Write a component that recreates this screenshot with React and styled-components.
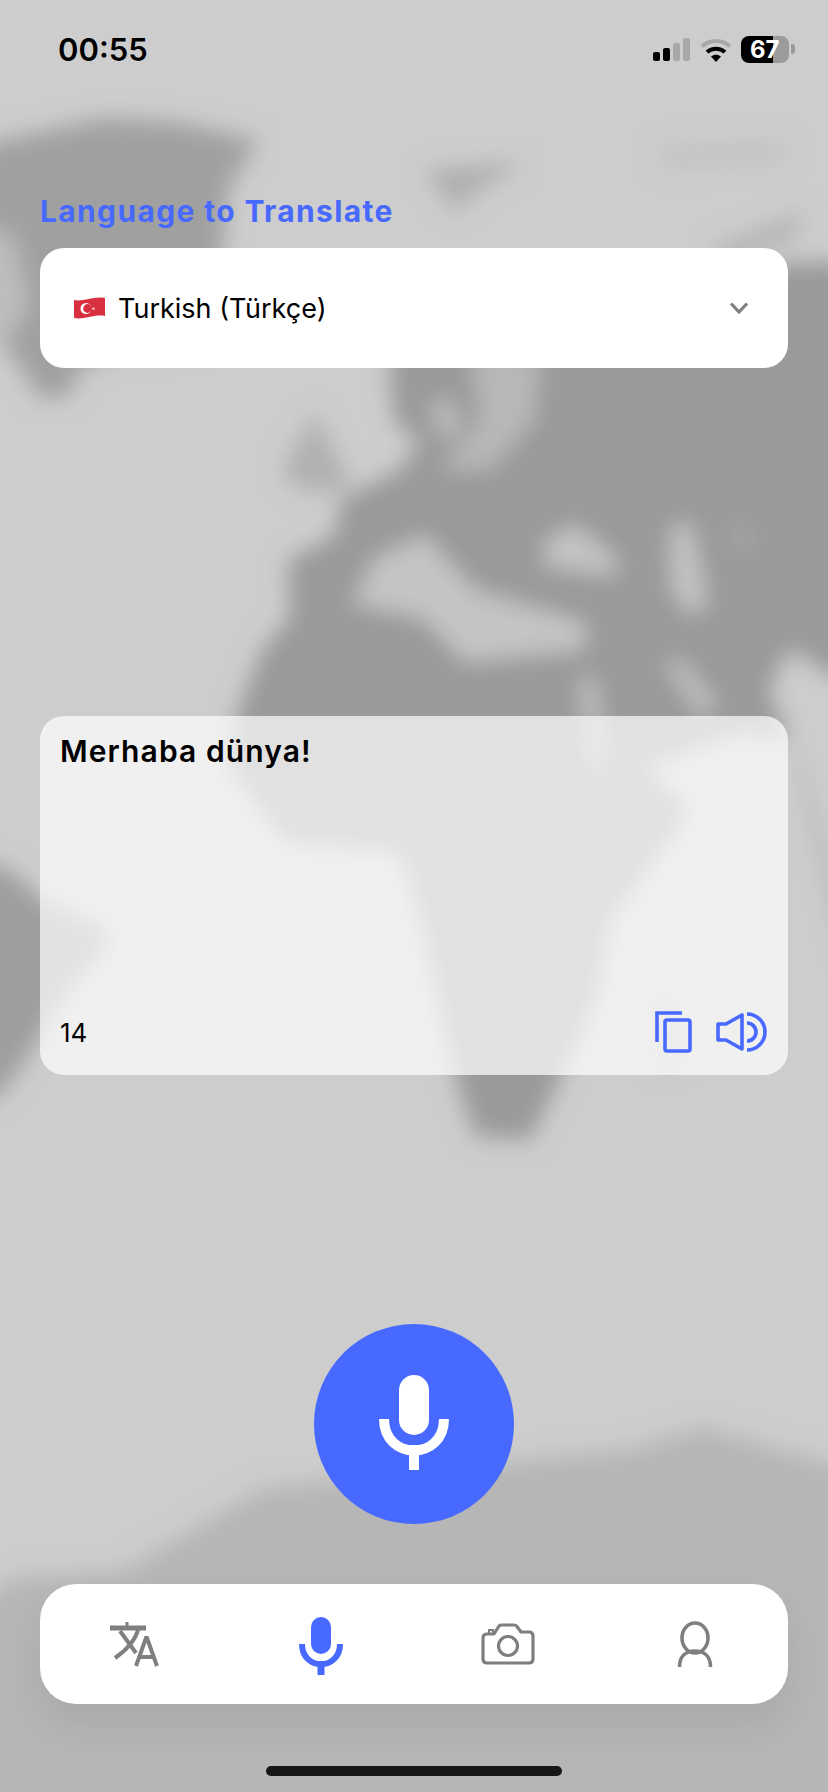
import React from "react";
import styled, { createGlobalStyle } from "styled-components";

const Global = createGlobalStyle`
  html, body { margin: 0; padding: 0; background: #cdcdcd; }
  * { box-sizing: border-box; }
`;

const BLUE = "#4869ff";
const GREY = "#7f7f7f";

const Page = styled.div`
  position: relative;
  width: 828px;
  height: 1792px;
  overflow: hidden;
  background: #cdcdcd;
  font-family: Inter, "Liberation Sans", sans-serif;
`;
const MapLayer = styled.svg`
  position: absolute;
  inset: 0;
  width: 828px;
  height: 1792px;
`;
const Content = styled.div`
  position: relative;
  display: flex;
  flex-direction: column;
  padding: 0 40px;
`;
const StatusBar = styled.div`
  display: flex;
  align-items: center;
  justify-content: space-between;
  height: 98px;
  margin: 0 -40px;
  padding: 0 33px 0 58px;
`;
const Time = styled.div`
  font-size: 31px;
  font-weight: 600;
  color: #000;
`;
const StatusIcons = styled.div`
  display: flex;
  align-items: center;
  gap: 9px;
`;
const Signal = styled.div`
  display: flex;
  align-items: flex-end;
  gap: 3px;
  height: 23px;
  margin: 1px 1px 0 0;
`;
const Bar = styled.span`
  display: block;
  width: 7px;
  height: ${(p) => p.$h}px;
  border-radius: 2px;
  background: ${(p) => (p.$on ? "#000" : "#a8a8a8")};
`;
const Battery = styled.div`
  display: flex;
  align-items: center;
  gap: 2px;
`;
const BatteryBody = styled.div`
  width: 48px;
  height: 27px;
  border-radius: 8px;
  background: linear-gradient(to right, #000 67%, #9b9b9b 67%);
  color: #fff;
  font-size: 24px;
  font-weight: 700;
  line-height: 27px;
  padding-left: 9px;
`;
const BatteryTip = styled.span`
  width: 4px;
  height: 10px;
  border-radius: 0 3px 3px 0;
  background: #9b9b9b;
`;
const Label = styled.div`
  margin-top: 95px;
  height: 36px;
  line-height: 36px;
  font-size: 30px;
  font-weight: 700;
  letter-spacing: 1.35px;
  color: ${BLUE};
  white-space: nowrap;
`;
const Selector = styled.div`
  margin-top: 19px;
  height: 120px;
  border-radius: 24px;
  background: #fff;
  display: flex;
  align-items: center;
  padding: 0 39px 0 33px;
`;
const SelectorText = styled.div`
  margin-left: 12px;
  flex: 1;
  font-size: 27px;
  color: #000;
`;
const TextCard = styled.div`
  margin-top: 348px;
  height: 359px;
  border-radius: 24px;
  background: rgba(255, 255, 255, 0.7);
  display: flex;
  flex-direction: column;
  justify-content: space-between;
  padding: 17px 20px 22px;
`;
const Phrase = styled.div`
  font-size: 30px;
  line-height: 36px;
  font-weight: 600;
  letter-spacing: 1.1px;
  color: #000;
`;
const CardFooter = styled.div`
  display: flex;
  align-items: center;
  justify-content: space-between;
`;
const Count = styled.div`
  font-size: 26px;
  color: #000;
`;
const Actions = styled.div`
  display: flex;
  align-items: center;
  gap: 24px;
`;
const MicButton = styled.div`
  margin: 249px auto 0;
  width: 200px;
  height: 200px;
  border-radius: 50%;
  background: ${BLUE};
  display: flex;
  align-items: center;
  justify-content: center;
  padding-bottom: 4px;
`;
const Nav = styled.div`
  margin-top: 60px;
  height: 120px;
  border-radius: 36px;
  background: #fff;
  display: grid;
  grid-template-columns: repeat(4, 1fr);
  align-items: center;
  justify-items: center;
  box-shadow: 0 22px 40px rgba(0, 0, 0, 0.07);
`;
const NavSlot = styled.div`
  display: flex;
  margin-top: ${(p) => p.$offset || 0}px;
`;
const HomeBar = styled.div`
  margin: 62px auto 0;
  width: 296px;
  height: 10px;
  border-radius: 5px;
  background: #161616;
`;

const WorldMap = () => (
  <MapLayer viewBox="0 0 828 1792">
    <defs>
      <filter id="soft" x="-10%" y="-10%" width="120%" height="120%">
        <feGaussianBlur stdDeviation="11" />
      </filter>
    </defs>
    <g filter="url(#soft)">
      <path fill="#a0a0a0" d="M-20 145 L105 118 L175 122 L258 140 L228 190 L218 300 L190 350 L120 350 L75 372 L75 392 L42 400 L15 360 L-20 320 Z" />
      <path fill="#bdbdbd" d="M-20 235 L10 230 L30 300 L10 340 L-20 340 Z" />
      <path fill="#aeaeae" d="M425 170 L525 162 L475 192 L455 212 Z" />
      <path fill="#c2c2c2" d="M660 146 L785 142 L785 162 L660 168 Z" />
      <path fill="#b6b6b6" d="M710 248 L805 210 L795 240 L730 268 Z" />
      <path fill="#b0b0b0" d="M282 470 L315 412 L352 486 L330 492 L296 488 Z" />
      <path fill="#9a9a9a" d="M388 360 L420 330 L800 262 L860 262 L860 1000 L792 740 L739 733 L644 767 L690 810 L640 880 L610 920 L596 1000 L558 1083 L530 1140 L475 1136 L454 1073 L424 933 L401 852 L285 842 L228 767 L236 716 L262 650 L290 618 L288 560 L336 535 L340 500 L400 470 L420 440 L395 425 Z" />
      <path fill="#b8b8b8" d="M470 352 L540 352 L535 420 L490 470 L440 470 L480 420 Z" />
      <path fill="#bdbdbd" d="M430 400 L452 400 L462 430 L440 440 Z" />
      <path fill="#c4c4c4" d="M375 558 L425 535 L475 590 L585 622 L585 650 L465 662 L422 618 L352 604 Z" />
      <path fill="#c4c4c4" d="M544 542 L575 524 L620 562 L612 576 L545 566 Z" />
      <path fill="#c4c4c4" d="M670 530 L690 520 L708 602 L690 616 L672 590 Z" />
      <path fill="#ababab" d="M736 526 L750 526 L750 550 L736 550 Z" />
      <path fill="#c0c0c0" d="M665 663 L680 658 L718 705 L700 718 Z" />
      <path fill="#c0c0c0" d="M578 680 L596 676 L606 770 L592 770 Z" />
      <path fill="#cdcdcd" d="M770 690 L790 650 L870 700 L870 1000 L800 760 Z" />
      <path fill="#b8b8b8" d="M655 1000 L672 995 L680 1060 L662 1072 Z" />
      <path fill="#9e9e9e" d="M-20 860 L10 870 L42 900 L105 927 L108 945 L69 990 L42 1033 L10 1083 L-20 1110 Z" />
      <path fill="#b6b6b6" d="M-20 1600 L16 1577 L121 1572 L264 1488 L422 1471 L634 1449 L702 1427 L792 1453 L860 1470 L860 1820 L-20 1820 Z" />
    </g>
  </MapLayer>
);

const Wifi = () => (
  <svg width="32" height="25" viewBox="0 0 32 25" fill="none">
    <path d="M2 9.5 C 9.5 2 22.5 2 30 9.5" stroke="#a8a8a8" strokeWidth="4" />
    <path d="M7 15 C 12 10.5 20 10.5 25 15" stroke="#000" strokeWidth="4" />
    <path d="M11 19.5 L16 25 L21 19.5 C 18 17 14 17 11 19.5 Z" fill="#000" />
  </svg>
);

const Flag = () => (
  <svg width="33" height="24" viewBox="0 0 33 24">
    <path d="M1 4 C 10 6 20 0 32 2 L32 20 C 20 18 12 24 1 22 Z" fill="#d8303f" />
    <circle cx="13" cy="12.5" r="5.5" fill="#fff" />
    <circle cx="14.6" cy="12.5" r="4.4" fill="#d8303f" />
    <path d="M18.5 12.6 l3.4-1.2-2 2.9-.1-3.4 2.1 2.8z" fill="#fff" />
  </svg>
);

const Chevron = () => (
  <svg width="20" height="14" viewBox="0 0 20 14" fill="none">
    <path d="M2 2.5 L10 11 L18 2.5" stroke={GREY} strokeWidth="3.2" />
  </svg>
);

const CopyIcon = () => (
  <svg width="38" height="42" viewBox="0 0 38 42" fill="none" stroke={BLUE} strokeWidth="3.6">
    <path d="M28 2 H3 V31" />
    <rect x="11" y="9" width="25" height="31" rx="2" />
  </svg>
);

const SpeakerIcon = () => (
  <svg width="52" height="40" viewBox="0 0 52 40" fill="none" stroke={BLUE} strokeWidth="3.6">
    <path d="M2 12 H10 L26 3 V37 L10 28 H2 Z" strokeLinejoin="round" />
    <path d="M31 11 A 9 9 0 0 1 31 29" />
    <path d="M31 2 A 18 18 0 0 1 31 38" />
  </svg>
);

const BigMic = () => (
  <svg width="70" height="95" viewBox="0 0 70 95" fill="none">
    <rect x="20" y="0" width="30" height="60" rx="15" fill="#fff" />
    <path d="M5 44 C 5 86 65 86 65 44" stroke="#fff" strokeWidth="10" />
    <rect x="30" y="70" width="10" height="25" fill="#fff" />
  </svg>
);

const TranslateIcon = () => (
  <svg width="50" height="46" viewBox="0 0 50 46" fill="none" stroke={GREY}>
    <path d="M1 7 H37" strokeWidth="5" />
    <path d="M18 1 V6" strokeWidth="3" />
    <path d="M11 10 L27 32" strokeWidth="4" />
    <path d="M29 9 C 26 20 16 30 6 37" strokeWidth="4" />
    <path d="M27 45 L37 17 H38 L48 45 M30 36 H45" strokeWidth="4" />
  </svg>
);

const SmallMic = () => (
  <svg width="44" height="58" viewBox="0 0 44 58" fill="none">
    <rect x="12" y="0" width="20" height="37" rx="10" fill={BLUE} />
    <path d="M3 27 C 3 54 41 54 41 27" stroke={BLUE} strokeWidth="6" />
    <rect x="18.5" y="44" width="7" height="14" fill={BLUE} />
  </svg>
);

const CameraIcon = () => (
  <svg width="54" height="42" viewBox="0 0 54 42" fill="none" stroke={GREY} strokeWidth="3.2">
    <path d="M6 11 H13 L18 3 Q19 2 21 2 H33 Q35 2 36 3.5 L40 9 H48 Q52 9 52 13 V36 Q52 40 48 40 H6 Q2 40 2 36 V15 Q2 11 6 11 Z" strokeLinejoin="round" />
    <path d="M8 10 V7 H12 V10" strokeWidth="2" />
    <circle cx="27" cy="23" r="9.5" />
  </svg>
);

const PersonIcon = () => (
  <svg width="36" height="47" viewBox="0 0 36 47" fill="none" stroke={GREY} strokeWidth="3.6">
    <ellipse cx="18" cy="17" rx="13" ry="15" />
    <path d="M2.5 46 C 2.5 36 8 30 18 30 C 28 30 33.5 36 33.5 46" />
  </svg>
);

export default function App() {
  return (
    <Page>
      <Global />
      <WorldMap />
      <Content>
        <StatusBar>
          <Time>00:55</Time>
          <StatusIcons>
            <Signal>
              <Bar $h={9} $on />
              <Bar $h={13} $on />
              <Bar $h={18} />
              <Bar $h={23} />
            </Signal>
            <Wifi />
            <Battery>
              <BatteryBody>67</BatteryBody>
              <BatteryTip />
            </Battery>
          </StatusIcons>
        </StatusBar>
        <Label>Language to Translate</Label>
        <Selector>
          <Flag />
          <SelectorText>Turkish (Türkçe)</SelectorText>
          <Chevron />
        </Selector>
        <TextCard>
          <Phrase>Merhaba dünya!</Phrase>
          <CardFooter>
            <Count>14</Count>
            <Actions>
              <CopyIcon />
              <SpeakerIcon />
            </Actions>
          </CardFooter>
        </TextCard>
        <MicButton>
          <BigMic />
        </MicButton>
        <Nav>
          <NavSlot><TranslateIcon /></NavSlot>
          <NavSlot $offset={3}><SmallMic /></NavSlot>
          <NavSlot><CameraIcon /></NavSlot>
          <NavSlot><PersonIcon /></NavSlot>
        </Nav>
        <HomeBar />
      </Content>
    </Page>
  );
}
